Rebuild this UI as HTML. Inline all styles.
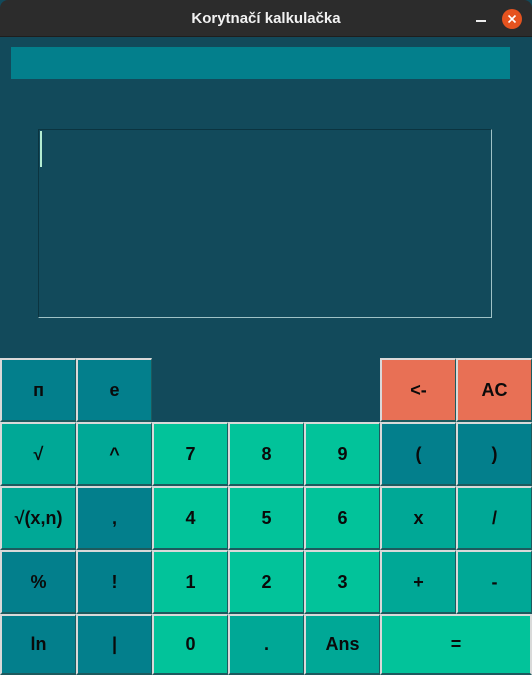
<!DOCTYPE html>
<html><head><meta charset="utf-8">
<style>
*{margin:0;padding:0;box-sizing:border-box}
html,body{width:532px;height:675px;overflow:hidden;background:#124a5b;font-family:"Liberation Sans","DejaVu Sans",sans-serif}
.title{position:absolute;left:0;top:0;width:532px;height:37px;background:#2c2c2c;color:#f2f2f2;font-weight:bold;font-size:15px;text-align:center;line-height:37px;border-radius:8px 8px 0 0;border-bottom:1px solid #1e1e1e}
.min{position:absolute;left:476px;top:20px;width:10px;height:2px;background:#eee}
.close{position:absolute;left:502px;top:9px;width:20px;height:20px;border-radius:50%;background:#e5531f}
.bar{position:absolute;left:11px;top:47px;width:499px;height:32px;background:#037f8c}
.ta{position:absolute;left:38px;top:129px;width:454px;height:189px;border-top:1px solid #0b3440;border-left:1px solid #0b3440;border-right:1px solid #9fc2c6;border-bottom:1px solid #9fc2c6}
.cur{position:absolute;left:40px;top:131px;width:2px;height:36px;background:#b3ecd2}
.b{position:absolute;width:76px;height:64px;border-top:2px solid #d9d9d9;border-left:2px solid #d9d9d9;border-right:1px solid #1d5a5e;border-bottom:2px solid #1d5a5e;display:flex;align-items:center;justify-content:center;font-size:18px;font-weight:bold;color:#0a0a0a}
.d{background:#037f8c}.m{background:#00a896}.l{background:#02c39a}.o{background:#e87055}
</style></head><body>
<div class="title">Korytnačí kalkulačka</div>
<div class="min"></div>
<div class="close"><svg width="20" height="20"><path d="M6.5 6.5L13.5 13.5M13.5 6.5L6.5 13.5" stroke="#fff" stroke-width="1.6"/></svg></div>
<div class="bar"></div>
<div class="ta"></div><div class="cur"></div>

<div class="b d" style="left:0;top:358px">п</div>
<div class="b d" style="left:76px;top:358px">e</div>
<div class="b o" style="left:380px;top:358px">&lt;-</div>
<div class="b o" style="left:456px;top:358px">AC</div>

<div class="b m" style="left:0;top:422px">√</div>
<div class="b m" style="left:76px;top:422px">^</div>
<div class="b l" style="left:152px;top:422px">7</div>
<div class="b l" style="left:228px;top:422px">8</div>
<div class="b l" style="left:304px;top:422px">9</div>
<div class="b d" style="left:380px;top:422px">(</div>
<div class="b d" style="left:456px;top:422px">)</div>

<div class="b m" style="left:0;top:486px">√(x,n)</div>
<div class="b d" style="left:76px;top:486px">,</div>
<div class="b l" style="left:152px;top:486px">4</div>
<div class="b l" style="left:228px;top:486px">5</div>
<div class="b l" style="left:304px;top:486px">6</div>
<div class="b m" style="left:380px;top:486px">x</div>
<div class="b m" style="left:456px;top:486px">/</div>

<div class="b d" style="left:0;top:550px">%</div>
<div class="b d" style="left:76px;top:550px">!</div>
<div class="b l" style="left:152px;top:550px">1</div>
<div class="b l" style="left:228px;top:550px">2</div>
<div class="b l" style="left:304px;top:550px">3</div>
<div class="b m" style="left:380px;top:550px">+</div>
<div class="b m" style="left:456px;top:550px">-</div>

<div class="b d" style="left:0;top:614px;height:61px">ln</div>
<div class="b d" style="left:76px;top:614px;height:61px">|</div>
<div class="b l" style="left:152px;top:614px;height:61px">0</div>
<div class="b m" style="left:228px;top:614px;height:61px">.</div>
<div class="b m" style="left:304px;top:614px;height:61px">Ans</div>
<div class="b l" style="left:380px;top:614px;width:152px;height:61px;border:2px solid #d9d9d9;border-bottom-color:#1d5a5e">=</div>
</body></html>
